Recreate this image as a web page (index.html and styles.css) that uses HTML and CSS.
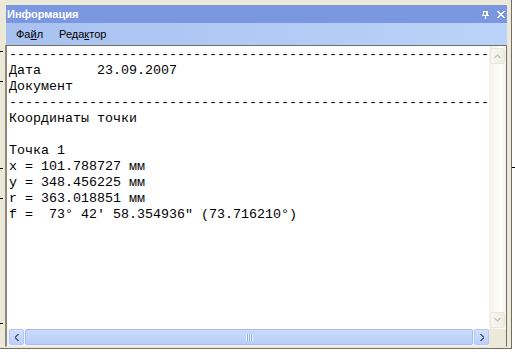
FILE: index.html
```html
<!DOCTYPE html>
<html lang="ru">
<head>
<meta charset="utf-8">
<title>Информация</title>
<link rel="stylesheet" href="styles.css">
</head>
<body>
<div class="window">
  <div class="titlebar">
    <span class="title">Информация</span>
    <span class="tb-buttons">
      <svg class="pin" width="7" height="8" viewBox="0 0 7 8" shape-rendering="crispEdges">
        <rect x="1" y="0" width="5" height="1"/>
        <rect x="1" y="0" width="1" height="4"/>
        <rect x="4" y="0" width="2" height="4"/>
        <rect x="0" y="4" width="7" height="1"/>
        <rect x="3" y="5" width="1" height="3"/>
      </svg>
      <svg class="close" width="8" height="7" viewBox="0 0 8 7" shape-rendering="crispEdges">
        <rect x="0" y="0" width="2" height="1"/><rect x="6" y="0" width="2" height="1"/>
        <rect x="1" y="1" width="2" height="1"/><rect x="5" y="1" width="2" height="1"/>
        <rect x="2" y="2" width="4" height="1"/>
        <rect x="3" y="3" width="2" height="1"/>
        <rect x="2" y="4" width="4" height="1"/>
        <rect x="1" y="5" width="2" height="1"/><rect x="5" y="5" width="2" height="1"/>
        <rect x="0" y="6" width="2" height="1"/><rect x="6" y="6" width="2" height="1"/>
      </svg>
    </span>
  </div>
  <div class="menubar">
    <span class="menu-item">Фа<u>й</u>л</span>
    <span class="menu-item">Реда<u>к</u>тор</span>
  </div>
  <div class="client">
    <pre class="text">------------------------------------------------------------
Дата       23.09.2007
Документ
------------------------------------------------------------
Координаты точки

Точка 1
x = 101.788727 мм
y = 348.456225 мм
r = 363.018851 мм
f =  73° 42' 58.354936" (73.716210°)</pre>
    <div class="vscroll">
      <div class="vbtn">
        <svg width="7" height="4" viewBox="0 0 7 4" shape-rendering="crispEdges">
          <rect x="3" y="0" width="1" height="1"/>
          <rect x="2" y="1" width="3" height="1"/>
          <rect x="1" y="2" width="2" height="1"/><rect x="4" y="2" width="2" height="1"/>
          <rect x="0" y="3" width="2" height="1"/><rect x="5" y="3" width="2" height="1"/>
        </svg>
      </div>
      <div class="vtrack"></div>
      <div class="vbtn">
        <svg width="7" height="4" viewBox="0 0 7 4" shape-rendering="crispEdges">
          <rect x="0" y="0" width="2" height="1"/><rect x="5" y="0" width="2" height="1"/>
          <rect x="1" y="1" width="2" height="1"/><rect x="4" y="1" width="2" height="1"/>
          <rect x="2" y="2" width="3" height="1"/>
          <rect x="3" y="3" width="1" height="1"/>
        </svg>
      </div>
    </div>
    <div class="hscroll">
      <div class="hbtn">
        <svg width="4" height="7" viewBox="0 0 4 7" shape-rendering="crispEdges">
          <rect x="2" y="0" width="2" height="1"/>
          <rect x="1" y="1" width="2" height="1"/>
          <rect x="0" y="2" width="2" height="1"/>
          <rect x="0" y="3" width="1" height="1"/>
          <rect x="0" y="4" width="2" height="1"/>
          <rect x="1" y="5" width="2" height="1"/>
          <rect x="2" y="6" width="2" height="1"/>
        </svg>
      </div>
      <div class="hthumb"><span class="grip"></span></div>
      <div class="hbtn">
        <svg width="4" height="7" viewBox="0 0 4 7" shape-rendering="crispEdges">
          <rect x="0" y="0" width="2" height="1"/>
          <rect x="1" y="1" width="2" height="1"/>
          <rect x="2" y="2" width="2" height="1"/>
          <rect x="3" y="3" width="1" height="1"/>
          <rect x="2" y="4" width="2" height="1"/>
          <rect x="1" y="5" width="2" height="1"/>
          <rect x="0" y="6" width="2" height="1"/>
        </svg>
      </div>
    </div>
    <div class="corner"></div>
  </div>
</div>
<span class="tick tick-l1"></span>
<span class="tick tick-l2"></span>
<span class="tick tick-l3"></span>
<span class="tick tick-l4"></span>
<span class="tick tick-l5"></span>
<span class="tick tick-r1"></span>
</body>
</html>
```

FILE: styles.css
```css
html, body {
  margin: 0;
  padding: 0;
}
body {
  position: relative;
  width: 515px;
  height: 354px;
  overflow: hidden;
  background: #ffffff;
  font-family: "Liberation Sans", Arial, sans-serif;
}
.window {
  box-sizing: border-box;
  width: 512px;
  height: 349px;
  background: #ece9d8;
  border-right: 1px solid #716f64;
  border-bottom: 1px solid #716f64;
  padding: 5px 4px 1px 5px;
  display: flex;
  flex-direction: column;
}
.titlebar {
  height: 18px;
  margin-left: 1px;
  background: #7b97e0;
  color: #ffffff;
  display: flex;
  align-items: center;
  justify-content: space-between;
  padding: 0 1px 0 1px;
}
.title {
  font-weight: bold;
  font-size: 11px;
  line-height: 18px;
}
.tb-buttons {
  display: flex;
  align-items: center;
  gap: 8px;
  margin-right: 1px;
  margin-top: 1px;
}
.tb-buttons svg {
  display: block;
  fill: #ffffff;
}
.menubar {
  height: 22px;
  margin-left: 1px;
  background: linear-gradient(to right, #a8c1ef, #bbd3f8);
  display: flex;
  padding-left: 2px;
  font-size: 11px;
  line-height: 22px;
  color: #000000;
}
.menu-item {
  padding: 0 8px;
}
.menu-item u {
  text-underline-offset: 1px;
}
.client {
  flex: 1;
  display: grid;
  grid-template-columns: 1fr 17px;
  grid-template-rows: 1fr 17px;
  border-top: 1px solid #716f64;
  border-left: 2px solid #8d8a7c;
  border-right: 1px solid #716f64;
  border-bottom: 1px solid #ece9d8;
  background: #ffffff;
  min-height: 0;
}
.text {
  margin: 0;
  padding: 1px 0 0 2px;
  font-family: "Liberation Mono", "Courier New", monospace;
  font-size: 13.333px;
  line-height: 16px;
  color: #000000;
  white-space: pre;
  overflow: hidden;
  background: #ffffff;
}
.vscroll {
  display: flex;
  flex-direction: column;
  background: linear-gradient(to right, #f3f1ea, #fefefb 70%, #f4f3ee);
  padding: 2px 1px 1px 1px;
}
.vbtn {
  box-sizing: border-box;
  height: 16px;
  border: 1px solid #e7e5dc;
  border-radius: 2px;
  background: linear-gradient(to right, #f7f6f1, #eeede5);
  display: flex;
  align-items: center;
  justify-content: center;
}
.vbtn svg {
  display: block;
  fill: #c9c7ba;
}
.vtrack {
  flex: 1;
}
.hscroll {
  display: flex;
  align-items: stretch;
  background: #eef3fd;
  padding: 0 0 1px 2px;
  gap: 1px;
}
.hbtn {
  width: 15px;
  box-sizing: border-box;
  border: 1px solid #b4c8f6;
  border-radius: 2px;
  background: linear-gradient(to bottom, #d3e0fd, #bccffa);
  display: flex;
  align-items: center;
  justify-content: center;
}
.hbtn svg {
  display: block;
  fill: #4d6185;
}
.hthumb {
  flex: 1;
  box-sizing: border-box;
  border: 1px solid #a6bdf0;
  border-radius: 2px;
  background: linear-gradient(to bottom, #cbdafc, #b8cdf8);
  display: flex;
  align-items: center;
  justify-content: center;
}
.grip {
  width: 7px;
  height: 7px;
  background: repeating-linear-gradient(to right, #eef4fe 0 1px, #8cb0f0 1px 2px);
}
.corner {
  background: #ece9d8;
}
.tick {
  position: absolute;
  height: 1px;
  width: 3px;
  background: #000000;
}
.tick-l1 { left: 0; top: 51px; }
.tick-l2 { left: 0; top: 81px; }
.tick-l3 { left: 0; top: 168px; }
.tick-l4 { left: 0; top: 198px; }
.tick-l5 { left: 0; top: 323px; }
.tick-r1 { left: 512px; top: 167px; }
```
